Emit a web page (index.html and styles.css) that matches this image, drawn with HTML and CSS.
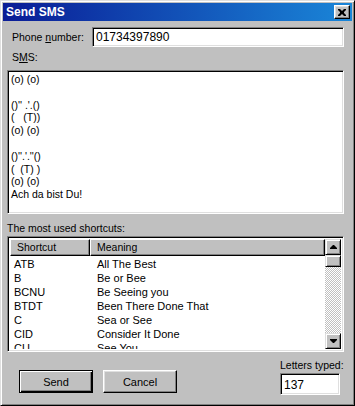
FILE: index.html
```html
<!DOCTYPE html>
<html lang="en">
<head>
    <meta charset="UTF-8">
    <meta name="viewport" content="width=device-width, initial-scale=1.0">
    <title>Send SMS</title>
    <link rel="stylesheet" href="styles.css">
</head>
<body>
    <div id="window">
        <div class="titlebar">
            <span class="title">Send SMS</span>
            <button class="close-btn" aria-label="Close">
                <svg width="8" height="7" viewBox="0 0 8 7"><path d="M0 0h2l2 2 2-2h2v1l-2 2v1l2 2v1h-2l-2-2-2 2h-2v-1l2-2v-1l-2-2z" fill="#000"/></svg>
            </button>
        </div>
        <div class="content">
            <div class="phone-row">
                <label for="phone">Phone <u>n</u>umber:</label>
                <input id="phone" class="field phone-input" type="text" value="01734397890">
            </div>
            <label class="sms-label">S<u>M</u>S:</label>
            <div class="field sms-box">(o) (o)

()'' .'.()
(   (T))
(o) (o)

()''.'.''()
(  (T) )
(o) (o)
Ach da bist Du!</div>
            <div class="list-label">The most used shortcuts:</div>
            <div class="field list">
                <div class="list-main">
                    <div class="list-header">
                        <div class="col-head col-short">Shortcut</div>
                        <div class="col-head col-mean">Meaning</div>
                    </div>
                    <div class="rows" id="rows"></div>
                </div>
                <div class="scrollbar">
                    <div class="raised sb-btn">
                        <svg width="7" height="4" viewBox="0 0 7 4"><path d="M3 0h1l3 3v1h-7v-1z" fill="#000"/></svg>
                    </div>
                    <div class="raised sb-thumb"></div>
                    <div class="sb-track"></div>
                    <div class="raised sb-btn">
                        <svg width="7" height="4" viewBox="0 0 7 4"><path d="M0 0h7v1l-3 3h-1l-3-3z" fill="#000"/></svg>
                    </div>
                </div>
            </div>
            <div class="footer">
                <div class="buttons">
                    <button class="btn default">Send</button>
                    <button class="btn">Cancel</button>
                </div>
                <div class="counter">
                    <div class="counter-label">Letters typed:</div>
                    <div class="field counter-box">137</div>
                </div>
            </div>
        </div>
    </div>
    <script>
        const shortcuts = [
            ["ATB", "All The Best"],
            ["B", "Be or Bee"],
            ["BCNU", "Be Seeing you"],
            ["BTDT", "Been There Done That"],
            ["C", "Sea or See"],
            ["CID", "Consider It Done"],
            ["CU", "See You"]
        ];
        const rows = document.getElementById("rows");
        shortcuts.forEach(function(s){
            rows.innerHTML += '<div class="row"><span class="col-short">' + s[0] +
                '</span><span class="col-mean">' + s[1] + '</span></div>';
        });
    </script>
</body>
</html>
```

FILE: styles.css
```css
body {
    margin: 0;
    padding: 0;
    background-color: #c0c0c0;
    font-family: 'Liberation Sans', Arial, sans-serif;
    font-size: 10.5px;
    color: #000;
}

#window {
    width: 355px;
    height: 406px;
    box-sizing: border-box;
    background-color: #c0c0c0;
    border: 1px solid;
    border-color: #dfdfdf #000 #000 #dfdfdf;
    box-shadow: inset 1px 1px #fff, inset -1px -1px #808080;
    padding: 2px;
    overflow: hidden;
}

.titlebar {
    height: 18px;
    display: flex;
    align-items: center;
    justify-content: space-between;
    padding: 0 2px 0 3px;
    background: linear-gradient(to right, #0a1c96, #1a86d8);
}

.title {
    color: #fff;
    font-weight: bold;
    font-size: 12px;
}

.close-btn {
    width: 16px;
    height: 14px;
    padding: 0;
    display: flex;
    align-items: center;
    justify-content: center;
    background-color: #c0c0c0;
    border: 1px solid;
    border-color: #fff #000 #000 #fff;
    box-shadow: inset -1px -1px #808080, inset 1px 1px #dfdfdf;
}

.content {
    padding: 0 8px 0 4px;
}

.field {
    box-sizing: border-box;
    background-color: #fff;
    border: 1px solid;
    border-color: #808080 #fff #fff #808080;
    box-shadow: inset 1px 1px #000, inset -1px -1px #dfdfdf;
}

.raised {
    box-sizing: border-box;
    background-color: #c0c0c0;
    border: 1px solid;
    border-color: #dfdfdf #000 #000 #dfdfdf;
    box-shadow: inset 1px 1px #fff, inset -1px -1px #808080;
}

.phone-row {
    display: flex;
    align-items: center;
    margin-top: 6px;
    height: 20px;
}

.phone-row label {
    margin-left: 5px;
}

.phone-input {
    margin-left: auto;
    width: 252px;
    height: 20px;
    padding: 0 3px;
    font-family: inherit;
    font-size: 12px;
    outline: none;
}

.sms-label {
    display: block;
    margin: 4px 0 0 5px;
    line-height: 13px;
}

.sms-box {
    margin-top: 6px;
    height: 144px;
    padding: 2px 3px;
    white-space: pre;
    line-height: 12.8px;
    overflow: hidden;
}

.list-label {
    margin-top: 8px;
    line-height: 13px;
}

.list {
    margin-top: 1px;
    height: 116px;
    padding: 2px;
    display: flex;
    overflow: hidden;
}

.list-main {
    flex: 1;
    overflow: hidden;
}

.list-header {
    display: flex;
    height: 17px;
}

.col-head {
    box-sizing: border-box;
    height: 17px;
    line-height: 15px;
    padding-left: 6px;
    background-color: #c0c0c0;
    border: 1px solid;
    border-color: #fff #000 #000 #fff;
    box-shadow: inset -1px -1px #808080;
}

.col-head.col-short {
    width: 80px;
}

.col-head.col-mean {
    flex: 1;
}

.rows {
    padding-top: 1px;
}

.row {
    display: flex;
    height: 14px;
    line-height: 14px;
    font-size: 11px;
}

.row .col-short {
    box-sizing: border-box;
    width: 80px;
    padding-left: 4px;
}

.row .col-mean {
    padding-left: 7px;
}

.scrollbar {
    width: 16px;
    display: flex;
    flex-direction: column;
}

.sb-btn {
    height: 16px;
    display: flex;
    align-items: center;
    justify-content: center;
}

.sb-thumb {
    height: 12px;
}

.sb-track {
    flex: 1;
    background: repeating-conic-gradient(#c0c0c0 0 25%, #fff 0 50%) 0 0 / 2px 2px;
}

.footer {
    display: flex;
    align-items: flex-end;
    justify-content: space-between;
    margin-top: 7px;
}

.buttons {
    display: flex;
    gap: 10px;
    margin: 0 0 2px 12px;
}

.btn {
    width: 74px;
    height: 23px;
    padding: 0;
    font-family: inherit;
    font-size: 11px;
    color: #000;
    background-color: #c0c0c0;
    border: 1px solid;
    border-color: #fff #000 #000 #fff;
    box-shadow: inset -1px -1px #808080, inset 1px 1px #dfdfdf;
}

.btn.default {
    border-color: #000;
    box-shadow: inset 1px 1px #fff, inset -1px -1px #000, inset -2px -2px #808080;
}

.counter {
    width: 62px;
    margin-right: 2px;
}

.counter-label {
    line-height: 13px;
    margin-bottom: 1px;
    white-space: nowrap;
}

.counter-box {
    width: 60px;
    height: 22px;
    padding: 0 3px;
    line-height: 22px;
    font-size: 12px;
}
```
